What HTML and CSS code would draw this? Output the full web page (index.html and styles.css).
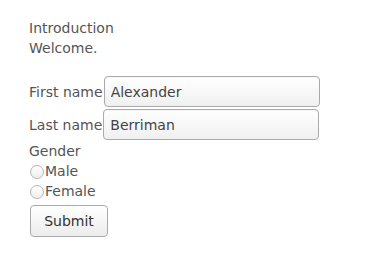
FILE: index.html
```html
<!DOCTYPE html>
<html>
<head>
<meta charset="utf-8">
<link rel="stylesheet" href="styles.css">
</head>
<body>
<div class="page">
  <div class="intro">
    <div class="line">Introduction</div>
    <div class="line">Welcome.</div>
  </div>
  <form class="form">
    <div class="row"><label class="lbl">First name</label><input class="field" type="text" value="Alexander"></div>
    <div class="row last"><label class="lbl">Last name</label><input class="field" type="text" value="Berriman"></div>
    <div class="line">Gender</div>
    <label class="radio-row"><span class="radio"></span>Male</label>
    <label class="radio-row"><span class="radio"></span>Female</label>
    <button class="btn" type="button">Submit</button>
  </form>
</div>
</body>
</html>
```
FILE: styles.css
```css
html, body { margin: 0; padding: 0; background: #fff; }
.page {
  padding: 18px 29px;
  font-family: "DejaVu Sans", sans-serif;
  font-size: 14px;
  line-height: 20px;
  color: #555;
}
.intro { margin-bottom: 18px; }
.line { height: 20px; }
.form { display: flex; flex-direction: column; align-items: flex-start; }
.row { display: flex; align-items: center; margin-bottom: 2px; }
.row.last { margin-bottom: 1px; }
.lbl { color: #555; margin-right: 1px; }
.field {
  box-sizing: border-box;
  width: 216px;
  height: 31px;
  border: 1px solid #aaa;
  border-radius: 4px;
  background: linear-gradient(#fff, #f0f0f0);
  font-family: "DejaVu Sans", sans-serif;
  font-size: 14px;
  color: #444;
  padding: 0 6px;
  box-shadow: inset 0 1px 1px rgba(0,0,0,0.04);
}
.radio-row { display: flex; align-items: center; height: 20px; }
.radio {
  flex: none;
  box-sizing: border-box;
  width: 14px; height: 14px;
  border: 1px solid #b5b5b5;
  border-radius: 50%;
  background: linear-gradient(#fff, #eee);
  margin: 1px 1px 0 1px;
}
.btn {
  box-sizing: border-box;
  margin-top: 4px;
  margin-left: 1px;
  width: 78px; height: 32px;
  border: 1px solid #aaa;
  border-radius: 4px;
  background: linear-gradient(#fff, #ececec);
  font-family: "DejaVu Sans", sans-serif;
  font-size: 14px;
  color: #333;
}
```
